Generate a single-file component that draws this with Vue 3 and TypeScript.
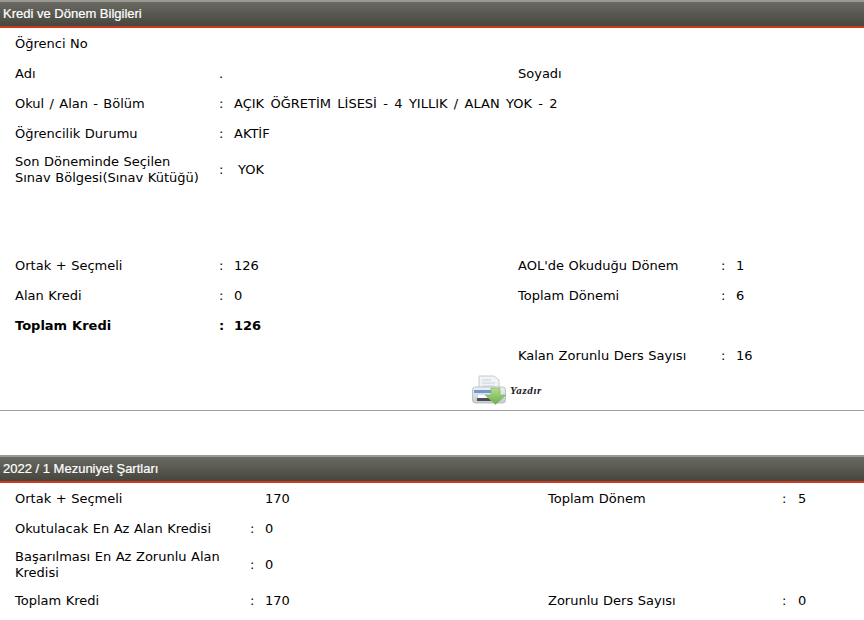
<script setup lang="ts">
interface Row { label: string; colon?: string; value?: string; label2?: string; value2?: string; bold?: boolean; tall?: boolean; wide?: boolean }
const top: Row[] = [
  { label: 'Öğrenci No' },
  { label: 'Adı', colon: '.', label2: 'Soyadı' },
  { label: 'Okul / Alan - Bölüm', colon: ':', value: 'AÇIK ÖĞRETİM LİSESİ - 4 YILLIK / ALAN YOK - 2', wide: true },
  { label: 'Öğrencilik Durumu', colon: ':', value: 'AKTİF' },
]
const credits: Row[] = [
  { label: 'Ortak + Seçmeli', colon: ':', value: '126', label2: "AOL'de Okuduğu Dönem", value2: '1' },
  { label: 'Alan Kredi', colon: ':', value: '0', label2: 'Toplam Dönemi', value2: '6' },
  { label: 'Toplam Kredi', colon: ':', value: '126', bold: true },
  { label: '', label2: 'Kalan Zorunlu Ders Sayısı', value2: '16' },
]
const terms: Row[] = [
  { label: 'Ortak + Seçmeli', value: '170', label2: 'Toplam Dönem', value2: '5' },
  { label: 'Okutulacak En Az Alan Kredisi', colon: ':', value: '0' },
  { label: 'Başarılması En Az Zorunlu Alan Kredisi', colon: ':', value: '0', tall: true },
  { label: 'Toplam Kredi', colon: ':', value: '170', label2: 'Zorunlu Ders Sayısı', value2: '0' },
]
</script>

<template>
  <div class="page">
    <h2 class="bar">Kredi ve Dönem Bilgileri</h2>
    <section class="table">
      <div v-for="r in top" :key="r.label" class="row" :class="{ wide: r.wide }">
        <span class="lab">{{ r.label }}</span>
        <span class="col">{{ r.colon }}</span>
        <span class="val">{{ r.value }}</span>
        <span class="lab2">{{ r.label2 }}</span>
      </div>
      <div class="row exam">
        <span class="lab">Son Döneminde Seçilen Sınav Bölgesi(Sınav Kütüğü)</span>
        <span class="col">:</span>
        <span class="val pad">YOK</span>
      </div>
    </section>
    <section class="table credits">
      <div v-for="r in credits" :key="r.label + r.label2" class="row" :class="{ bold: r.bold }">
        <span class="lab">{{ r.label }}</span>
        <span class="col">{{ r.colon }}</span>
        <span class="val">{{ r.value }}</span>
        <span class="lab2">{{ r.label2 }}</span>
        <span class="col2">{{ r.value2 ? ':' : '' }}</span>
        <span class="val2">{{ r.value2 }}</span>
      </div>
    </section>
    <div class="print">
      <svg class="printer" width="36" height="30" viewBox="0 0 36 30" aria-hidden="true">
        <defs>
          <linearGradient id="pb" x1="0" y1="0" x2="0" y2="1">
            <stop offset="0" stop-color="#eef2f6" />
            <stop offset="1" stop-color="#c3ccd4" />
          </linearGradient>
          <linearGradient id="ga" x1="0" y1="0" x2="0" y2="1">
            <stop offset="0" stop-color="#b4dc8a" />
            <stop offset="1" stop-color="#6bb04a" />
          </linearGradient>
        </defs>
        <path d="M7 1h15l5 4v9H7z" fill="#f1f3f5" stroke="#b9c0c6" stroke-width=".8" />
        <path d="M10 5h9M10 8h13M10 11h13" stroke="#cdd3d8" stroke-width="1" />
        <rect x="0.500" y="12" width="33" height="16" rx="3" fill="url(#pb)" stroke="#aeb6bd" stroke-width=".8" />
        <rect x="2" y="15" width="24" height="3" fill="#6f9bd0" />
        <rect x="5" y="23" width="16" height="3" fill="#4b4f53" />
        <rect x="6" y="20" width="14" height="3" fill="#fff" />
        <path d="M19 13h9v7h6l-10.500 9.500-10.500-9.500h6z" fill="url(#ga)" stroke="#7fb85e" stroke-width=".6" />
      </svg>
      <span class="yaz">Yazdır</span>
    </div>
    <hr class="rule" />
    <h2 class="bar second">2022 / 1 Mezuniyet Şartları</h2>
    <section class="table terms">
      <div v-for="r in terms" :key="r.label" class="row" :class="{ tall: r.tall }">
        <span class="lab">{{ r.label }}</span>
        <span class="col">{{ r.colon }}</span>
        <span class="val">{{ r.value }}</span>
        <span class="lab2">{{ r.label2 }}</span>
        <span class="col2">{{ r.value2 ? ':' : '' }}</span>
        <span class="val2">{{ r.value2 }}</span>
      </div>
    </section>
  </div>
</template>

<style scoped>
.page {
  width: 864px;
  height: 620px;
  overflow: hidden;
  background: #fff;
  color: #000;
  font-family: "DejaVu Sans", Verdana, sans-serif;
  font-size: 13px;
  word-spacing: 0.4px;
}
.bar {
  margin: 0;
  height: 28px;
  box-sizing: border-box;
  padding-left: 3px;
  border-top: 2px solid #9a9a94;
  border-bottom: 2px solid #d0391c;
  background: linear-gradient(#6a6a62, #46463f);
  color: #fff;
  font: 400 13px/24px "Liberation Sans", Arial, sans-serif;
  word-spacing: 0;
  -webkit-text-stroke: 0.2px #fff;
}
.second { margin-top: 44px; }
.table { padding: 1px 0 0 15px; }
.row {
  display: grid;
  grid-template-columns: 204px 15px 284px 203px 15px 1fr;
  height: 30px;
  align-items: center;
  line-height: 16px;
}
.val { white-space: nowrap; }
.wide { word-spacing: 1.2px; }
.wide .val { word-spacing: 2.2px; }
.lab2 { grid-column: 4; }
.col2 { grid-column: 5; }
.val2 { grid-column: 6; }
.exam { height: 42px; }
.exam .lab { width: 190px; }
.pad { padding-left: 4px; }
.credits { margin-top: 59px; }
.bold { font-weight: 700; }
.print {
  height: 37px;
  box-sizing: border-box;
  padding-left: 472px;
  display: flex;
  align-items: center;
  gap: 2px;
}
.printer { filter: blur(0.4px); }
.yaz {
  margin-top: 1px;
  font: italic 700 11px "Liberation Serif", serif;
  letter-spacing: 0.6px;
  color: #222;
}
.rule {
  margin: 2px 0 0;
  border: 0;
  border-top: 1px solid #a0a0a0;
}
.terms .row { grid-template-columns: 235px 15px 283px 234px 16px 1fr; }
.terms .tall { height: 42px; }
.terms .lab { padding-right: 10px; }
</style>
